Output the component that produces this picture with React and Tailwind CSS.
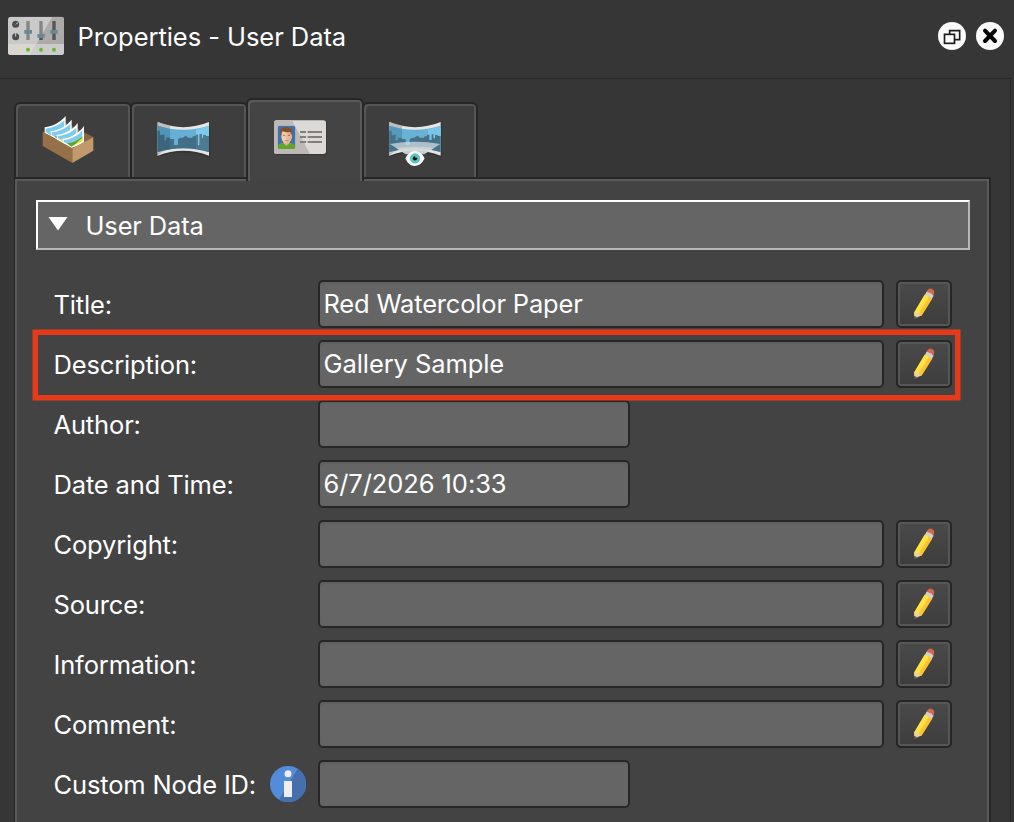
import { useState } from 'react';
import clsx from 'clsx';

const FIELDS = [
    { label: 'Title:', value: 'Red Watercolor Paper', wide: true },
    { label: 'Description:', value: 'Gallery Sample', wide: true, highlighted: true },
    { label: 'Author:', value: '' },
    { label: 'Date and Time:', value: '6/7/2026 10:33' },
    { label: 'Copyright:', value: '', wide: true },
    { label: 'Source:', value: '', wide: true },
    { label: 'Information:', value: '', wide: true },
    { label: 'Comment:', value: '', wide: true },
    { label: 'Custom Node ID:', value: '', info: true },
];

function MixerIcon() {
    return (
        <svg viewBox="21 45 174 123" className="h-[41px] w-[58px]">
            <defs>
                <clipPath id="mixer"><rect x="24" y="50" width="168" height="115" rx="9" /></clipPath>
            </defs>
            <g clipPath="url(#mixer)">
                <rect x="24" y="50" width="168" height="115" fill="#c9c9c9" />
                <path d="M157 50H192V132H109Z" fill="#adaba9" />
                <path d="M24 132H109L90 165H24Z" fill="#dad6d2" />
                <path d="M109 132H192V165H90Z" fill="#cccccc" />
            </g>
            <circle cx="47" cy="73" r="10.5" fill="#4b4b4b" />
            <path d="M47 73L55 67" stroke="#c9c9c9" strokeWidth="3" />
            <circle cx="47" cy="110" r="10.5" fill="#4b4b4b" />
            <path d="M47 99V110" stroke="#c9c9c9" strokeWidth="3" />
            <path d="M84 63V120M123 63V120" stroke="#858585" strokeWidth="10" />
            <path d="M162 63V120" stroke="#555" strokeWidth="10" />
            <path d="M123 113V120" stroke="#555" strokeWidth="10" />
            <path d="M73 90H96V101H73ZM112 102H134V113H112ZM151 90H173V101H151Z" fill="#668995" />
            <circle cx="84" cy="149" r="6" fill="#6cb52d" />
            <circle cx="123" cy="149" r="6" fill="#6cb52d" />
            <circle cx="162" cy="149" r="6" fill="#6cb52d" />
        </svg>
    );
}

function DetachIcon() {
    return (
        <svg viewBox="69 63 90 90" className="size-[30px]">
            <circle cx="114" cy="108" r="42" fill="#fafafa" />
            <path d="M107 102V92H137V119H122" fill="none" stroke="#1c1c1c" strokeWidth="5" />
            <rect x="91.5" y="103" width="30" height="27" fill="#fafafa" stroke="#1c1c1c" strokeWidth="5" />
        </svg>
    );
}

function CloseIcon() {
    return (
        <svg viewBox="183 63 90 90" className="size-[30px]">
            <circle cx="228" cy="108" r="42" fill="#fafafa" />
            <path d="M213 92L243 123M243 92L213 123" stroke="#000" strokeWidth="12" strokeLinecap="round" />
        </svg>
    );
}

function FileBoxIcon() {
    return (
        <svg viewBox="102 60 156 150" className="h-[50px] w-[52px]">
            <path d="M104 112L170 82L256 126L193 160Z" fill="#86653f" />
            <path d="M110 97C135 94 157 82 173 63V112L130 124L110 114Z" fill="#fff" />
            <path d="M113 101C137 98 156 88 169 76V94C155 106 139 114 122 116L113 111Z" fill="#7ecbf0" />
            <path d="M122 116C140 114 156 106 169 94V104L132 123Z" fill="#5da52c" />
            <path d="M128 109C152 106 175 94 191 74V120L148 134L128 123Z" fill="#fff" />
            <path d="M131 112C155 109 174 99 187 87V105C172 117 155 122 139 124L131 120Z" fill="#7ecbf0" />
            <path d="M139 124C158 123 175 115 187 105V114L149 133Z" fill="#5da52c" />
            <path d="M146 120C170 117 193 105 209 84V130L166 146L146 134Z" fill="#fff" />
            <path d="M149 123C173 121 192 110 205 98V115C190 128 174 132 157 134L149 130Z" fill="#7ecbf0" />
            <path d="M157 134C178 132 193 125 205 115V126L166 143Z" fill="#f3df1f" />
            <path d="M164 131C188 129 212 116 228 93V145L190 159L164 145Z" fill="#fff" />
            <path d="M167 135C190 133 210 120 223 107V124C207 140 191 145 176 145L167 141Z" fill="#7ecbf0" />
            <path d="M176 145C194 145 209 136 223 124V135L190 155Z" fill="#5da52c" />
            <path d="M206 143L223 128V138L200 151Z" fill="#e8e328" />
            <path d="M104 110L193 160V204L104 153Z" fill="#957049" />
            <path d="M193 160L256 126V167L193 204Z" fill="#c1996a" />
        </svg>
    );
}

function PanoramaIcon() {
    return (
        <svg viewBox="78 75 168 114" className="h-[38px] w-[56px]">
            <path d="M86 85Q162 111 240 85V188Q162 160 86 185Z" fill="#2b2b2b" opacity=".55" />
            <path d="M83 81Q160 112 237 81V182Q160 153 83 182Z" fill="#e6e6e6" />
            <path d="M83 81Q100 88 120 93V163Q100 166 83 182Z" fill="#bdbdbd" />
            <path d="M83 92Q160 116 237 92V171Q160 148 83 171Z" fill="#66b0d5" />
            <path d="M198 102Q220 99 237 92V171Q217 163 198 162Z" fill="#7fc9ed" />
            <path d="M83 92L120 102V161Q100 164 83 171Z" fill="#5194b6" />
            <path d="M83 107H89V121H97V119H103V136H109V128H121V132H132V150H144V133L151 128H158L167 122L175 128H188V124H197V119H203V151H209V118H215V130H220V120H228V123H237V171Q160 148 83 171Z" fill="#436f86" />
            <path d="M83 107H89V121H97V119H103V136H109V128H120V161Q100 164 83 171Z" fill="#3c647b" />
            <path d="M198 119H203V151H209V118H215V130H220V120H228V123H237V171Q217 163 198 160Z" fill="#4e7b92" />
        </svg>
    );
}

function IdCardIcon() {
    return (
        <svg viewBox="81 69 168 114" className="h-[38px] w-[56px]">
            <defs>
                <clipPath id="portrait"><rect x="98" y="92" width="53" height="70" rx="7" /></clipPath>
            </defs>
            <rect x="90" y="79" width="155" height="101" rx="8" fill="#2c2c2c" opacity=".6" />
            <rect x="87" y="76" width="156" height="101" rx="8" fill="#dcd9d6" />
            <path d="M95 76H141L195 177H95A8 8 0 0 1 87 169V84A8 8 0 0 1 95 76Z" fill="#bdb9b6" />
            <g clipPath="url(#portrait)">
                <rect x="98" y="92" width="53" height="70" fill="#426fae" />
                <path d="M98 162V154Q100 145 113 143L124 151L137 143Q148 145 151 154V162Z" fill="#63a42b" />
                <path d="M115 136H134V145L124 152L115 145Z" fill="#ddb18c" />
                <path d="M109 113Q109 102 124 102T140 113V128Q137 143 124 145Q112 143 109 128Z" fill="#f2caaa" />
                <path d="M124 104H140V128Q137 143 124 145Z" fill="#e8b792" />
                <path d="M106 120V108Q106 98 116 98Q123 94 132 98Q142 99 141 110L140 121Q136 118 136 111Q122 113 113 109Q109 112 109 121Z" fill="#83502d" />
                <path d="M114 121H120M129 121H135" stroke="#74462d" strokeWidth="2" />
                <path d="M119 137H130" stroke="#c67461" strokeWidth="2.5" />
            </g>
            <path d="M165 111H183M165 126H183M165 141H183M188 111H231M188 126H231M188 141H231" stroke="#827e7c" strokeWidth="6" />
        </svg>
    );
}

function PanoramaViewIcon() {
    return (
        <svg viewBox="84 75 168 144" className="h-[48px] w-[56px]">
            <path d="M91 85Q167 111 246 85V188Q167 160 91 185Z" fill="#2b2b2b" opacity=".55" />
            <path d="M88 81Q165 112 242 81V182Q165 153 88 182Z" fill="#e6e6e6" />
            <path d="M88 81Q105 88 126 93V163Q105 166 88 182Z" fill="#bdbdbd" />
            <path d="M88 92Q165 116 242 92V171Q165 148 88 171Z" fill="#69b1d5" />
            <path d="M204 102Q225 99 242 92V171Q222 163 204 162Z" fill="#79c5e9" />
            <path d="M88 92L126 102V161Q105 164 88 171Z" fill="#559abd" />
            <path d="M88 107H95V121H101V119H107V136H114V128H125V132H137V150H149V133L156 128H163L172 122L180 128H193V124H201V119H208V135H215V118H220V130H225V120H233V123H242V171Q165 148 88 171Z" fill="#457187" />
            <path d="M90 147Q165 134 241 147L193 177H137Z" fill="#d7e2e9" opacity=".7" />
            <path d="M108 159Q165 151 222 159L193 178H137Z" fill="#d3d5d4" opacity=".75" />
            <path d="M136 190Q147 168 165 168T194 190Q184 212 165 213T136 190Z" fill="#fff" />
            <circle cx="165" cy="190" r="15.5" fill="#58cac3" />
            <circle cx="165" cy="190" r="6.5" fill="#101010" />
            <circle cx="168" cy="186" r="2" fill="#d9f5f3" />
        </svg>
    );
}

function PencilIcon() {
    return (
        <svg viewBox="6 6 156 132" className="h-[44px] w-[52px]">
            <path d="M90 38L95 30Q99 24 107 26Q115 29 115 37Q115 41 110 50Z" fill="#d4694a" />
            <path d="M86 46L92 35Q104 38 113 47L107 58Z" fill="#d0cfd3" />
            <path d="M54 98L86 44Q101 47 108 58L77 107Z" fill="#fdc22f" />
            <path d="M54 98L86 44Q94 45 99 50L67 103Z" fill="#ffe345" />
            <path d="M54 97L65 99L77 106L55 116Z" fill="#ead3a1" />
            <path d="M54 108L63 111L54 117Z" fill="#574d3e" />
        </svg>
    );
}

function InfoIcon() {
    return (
        <svg viewBox="720 78 108 108" className="size-9 shrink-0">
            <circle cx="774" cy="132" r="54" fill="#528cdb" />
            <path d="M803 86A54 54 0 0 1 747 179Z" fill="#466faf" />
            <circle cx="774" cy="101" r="10.5" fill="#efefef" />
            <path d="M762 123H786V171H762Z" fill="#efefef" />
        </svg>
    );
}

const TABS = [
    { id: 'files', icon: FileBoxIcon, className: 'w-[118px] pl-[26px] pt-[11px]' },
    { id: 'panorama', icon: PanoramaIcon, className: '-ml-0.5 w-[118px] pl-6 pt-4' },
    { id: 'user', icon: IdCardIcon, className: '-ml-0.5 w-[118px] pl-6' },
    { id: 'view', icon: PanoramaViewIcon, className: '-ml-0.5 w-[116px] pl-6 pt-4' },
];

function FieldRow({ field }) {
    return (
        <div className="relative flex h-12 items-center">
            <div className="flex w-[264px] items-center justify-between pr-3">
                <label className="-ml-[0.5px] whitespace-nowrap pt-[2px] tracking-[-0.15px]">{field.label}</label>
                {field.info && <InfoIcon />}
            </div>
            <div
                className={clsx(
                    'flex h-12 items-center rounded-[5px] border-2 border-[#262626] bg-[#656565] pl-[3.5px] shadow-[inset_0_2px_1px_#606060]',
                    field.wide ? 'w-[566px]' : 'w-[312px]',
                    field.wide && !field.highlighted ? 'tracking-[-0.18px]' : 'tracking-[-0.08px]'
                )}
            >
                {field.value}
            </div>
            {field.wide && (
                <button className="ml-3 h-12 w-14 rounded-[5px] border-2 border-[#262626] bg-linear-to-b from-[#4a4a4a] to-[#3d3d3d] shadow-[inset_0_0_0_2px_#575757]">
                    <PencilIcon />
                </button>
            )}
            {field.highlighted && (
                <div className="pointer-events-none absolute -left-[21px] -top-[10px] z-10 h-[70px] w-[927px] border-[5px] border-[#e63a1a] shadow-[0_0_0_0.5px_#e63a1a]" />
            )}
        </div>
    );
}

export default function App() {
    const [activeTab, setActiveTab] = useState('user');

    return (
        <div className="flex h-[822px] w-[1014px] flex-col overflow-hidden bg-[#363636] font-['Inter',sans-serif] text-[25.5px] leading-8 tracking-[-0.2px] text-white">
            <header className="flex h-[78px] items-start justify-between pl-[7px] pr-[9px]">
                <div className="flex items-start gap-[12.5px] pt-[15px]">
                    <MixerIcon />
                    <h1 className="pt-[6px] tracking-[-0.05px]">Properties - User Data</h1>
                </div>
                <div className="flex gap-2 pt-[21px]">
                    <DetachIcon />
                    <CloseIcon />
                </div>
            </header>

            <div className="flex w-[1011px] grow flex-col border-r border-t border-[#292929] pl-[14px] pt-[19px]">
                <div className="relative z-10 flex h-[83px] items-start">
                    {TABS.map((tab) => {
                        const Icon = tab.icon;
                        const active = tab.id === activeTab;
                        return (
                            <button
                                key={tab.id}
                                onClick={() => setActiveTab(tab.id)}
                                className={clsx(
                                    'flex items-start rounded-t-[6px] border-2 border-b-0 border-[#262626]',
                                    tab.className,
                                    active
                                        ? 'z-10 h-[83px] bg-[#444] pt-[18px] shadow-[inset_2px_2px_0_#5a5a5a,inset_-2px_0_0_#5a5a5a]'
                                        : 'mt-1 h-[75px] bg-[#3e3e3e] shadow-[inset_2px_2px_0_#555,inset_-2px_0_0_#555]'
                                )}
                            >
                                <Icon />
                            </button>
                        );
                    })}
                </div>

                <section className="-mt-1 w-[977px] grow border-2 border-b-0 border-l border-[#262626] bg-[#434343] shadow-[inset_2px_2px_0_#5a5a5a,inset_-2px_0_0_#5a5a5a]">
                    <div className="ml-[21px] mt-[21px] flex h-[50px] w-[934px] items-center border-2 border-b-[#b8b8b8] border-l-white border-r-[#b8b8b8] border-t-white bg-[#656565] pl-[10px]">
                        <svg viewBox="0 0 20 14" className="-mt-[3px] h-[14px] w-5">
                            <path d="M.5 0H19.5L10 13.5Z" fill="#fff" />
                        </svg>
                        <h2 className="pl-[17.5px] pt-[2px] tracking-[-0.15px]">User Data</h2>
                    </div>
                    <div className="mt-[30px] flex flex-col gap-3 pl-[39px]">
                        {FIELDS.map((field) => (
                            <FieldRow key={field.label} field={field} />
                        ))}
                    </div>
                </section>
            </div>
        </div>
    );
}
